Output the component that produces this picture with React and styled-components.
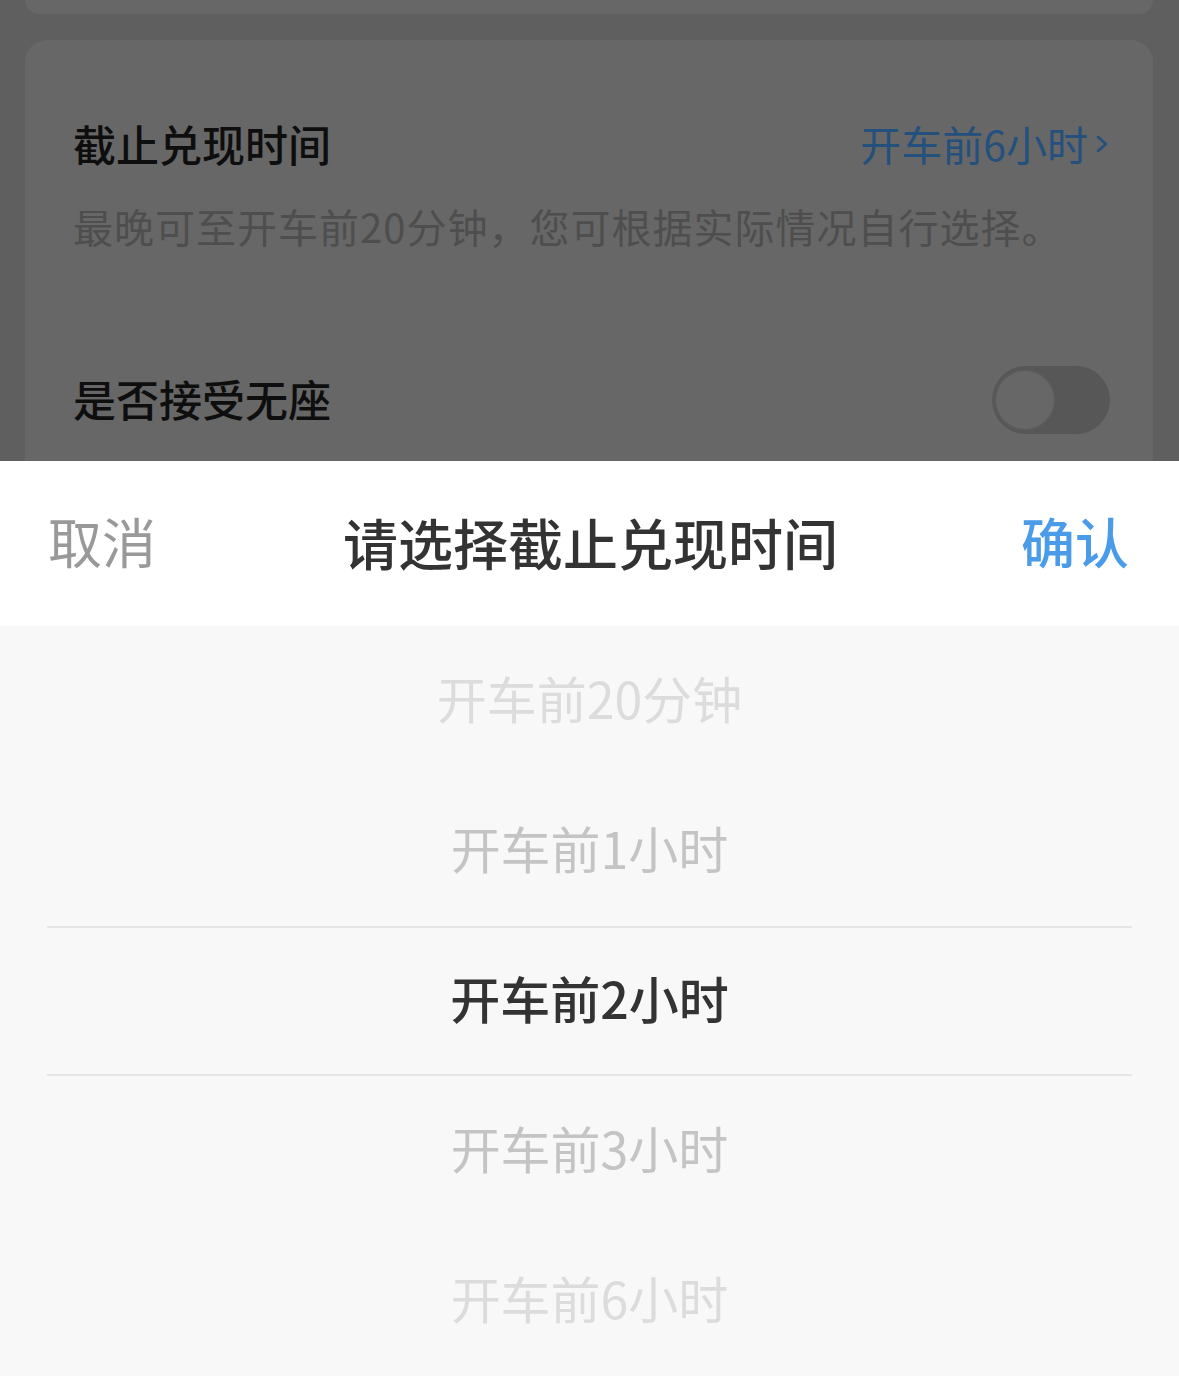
import React from 'react'
import styled, { createGlobalStyle } from 'styled-components'

const options = [
	{ label: '开车前20分钟', tone: 'far' },
	{ label: '开车前1小时', tone: 'near' },
	{ label: '开车前2小时', tone: 'active' },
	{ label: '开车前3小时', tone: 'near' },
	{ label: '开车前6小时', tone: 'far' }
]

const tones = {
	far: '#dcdcdc',
	near: '#c4c4c4',
	active: '#333333'
}

const GlobalStyle = createGlobalStyle`
  html, body {
    margin: 0;
    padding: 0;
    background: #f8f8f8;
  }
  body {
    font-family: 'PingFang SC', 'Noto Sans CJK SC', 'Noto Sans', sans-serif;
  }
`

export default function App() {
	return (
		<Screen>
			<GlobalStyle />
			<Backdrop>
				<TopCard />
				<Card>
					<Row>
						<Label>截止兑现时间</Label>
						<Value>
							开车前6小时
							<svg width="16" height="28" viewBox="0 0 16 28" fill="none">
								<path d="M4 7l8 7-8 7" stroke="#24507e" strokeWidth="2.6" strokeLinecap="round" strokeLinejoin="round" />
							</svg>
						</Value>
					</Row>
					<Hint>最晚可至开车前20分钟，您可根据实际情况自行选择。</Hint>
					<SwitchRow>
						<Label>是否接受无座</Label>
						<Toggle>
							<Knob />
						</Toggle>
					</SwitchRow>
				</Card>
			</Backdrop>
			<Sheet>
				<SheetHeader>
					<Cancel>取消</Cancel>
					<Title>请选择截止兑现时间</Title>
					<Confirm>确认</Confirm>
				</SheetHeader>
				<Picker>
					{options.map((opt) => (
						<Option key={opt.label} $tone={opt.tone}>{opt.label}</Option>
					))}
				</Picker>
			</Sheet>
		</Screen>
	)
}

const Screen = styled.div`
  width: 1179px;
  height: 1376px;
  display: flex;
  flex-direction: column;
  overflow: hidden;
`

const Backdrop = styled.div`
  height: 462px;
  background: #5f5f60;
  padding: 0 26px 0 25px;
  box-sizing: border-box;
  overflow: hidden;
  display: flex;
  flex-direction: column;
  gap: 26px;
`

const TopCard = styled.div`
  height: 14px;
  background: #676767;
  border-radius: 0 0 20px 20px;
  flex-shrink: 0;
`

const Card = styled.div`
  background: #676767;
  border-radius: 22px 22px 0 0;
  padding: 73px 43px 0 48px;
  flex: 1;
  display: flex;
  flex-direction: column;
`

const Row = styled.div`
  height: 60px;
  display: flex;
  align-items: center;
  justify-content: space-between;
`

const Label = styled.div`
  font-size: 43px;
  font-weight: 500;
  color: #0e0e0e;
  line-height: 60px;
`

const Value = styled.div`
  font-size: 41px;
  color: #24507e;
  display: flex;
  align-items: center;
  gap: 6px;
  svg {
    margin-top: 2px;
  }
`

const Hint = styled.div`
  margin-top: 23px;
  font-size: 40px;
  line-height: 60px;
  color: #4e4e4e;
  letter-spacing: 1px;
`

const SwitchRow = styled(Row)`
  height: 68px;
  margin-top: 110px;
  ${Label} {
    margin-top: -4px;
  }
`

const Toggle = styled.div`
  width: 118px;
  height: 68px;
  border-radius: 34px;
  background: #575757;
  display: flex;
  align-items: center;
  padding: 0 4px;
  box-sizing: border-box;
`

const Knob = styled.div`
  width: 58px;
  height: 58px;
  border-radius: 50%;
  background: #676767;
  box-shadow: 0 0 0 2px #5a5a5a;
`

const Sheet = styled.div`
  flex: 1;
  display: flex;
  flex-direction: column;
  background: #f8f8f8;
`

const SheetHeader = styled.div`
  height: 165px;
  background: #ffffff;
  display: flex;
  align-items: center;
  justify-content: space-between;
  padding: 0 50px 6px 48px;
  box-sizing: border-box;
  font-size: 54px;
`

const Cancel = styled.div`
  color: #999999;
`

const Title = styled.div`
  color: #333333;
  font-weight: 500;
  font-size: 55px;
  margin-left: 4px;
`

const Confirm = styled.div`
  color: #4a9be8;
  font-weight: 500;
`

const Picker = styled.div`
  display: flex;
  flex-direction: column;
  padding: 0 47px;
`

const Option = styled.div`
  height: 150px;
  display: flex;
  align-items: center;
  justify-content: center;
  padding-bottom: 8px;
  font-size: 50px;
  font-weight: ${(p) => (p.$tone === 'active' ? 500 : 400)};
  color: ${(p) => tones[p.$tone]};
  box-sizing: border-box;
  border-top: ${(p) => (p.$tone === 'active' ? '2px solid #e6e6e6' : 'none')};
  border-bottom: ${(p) => (p.$tone === 'active' ? '2px solid #e6e6e6' : 'none')};
`
